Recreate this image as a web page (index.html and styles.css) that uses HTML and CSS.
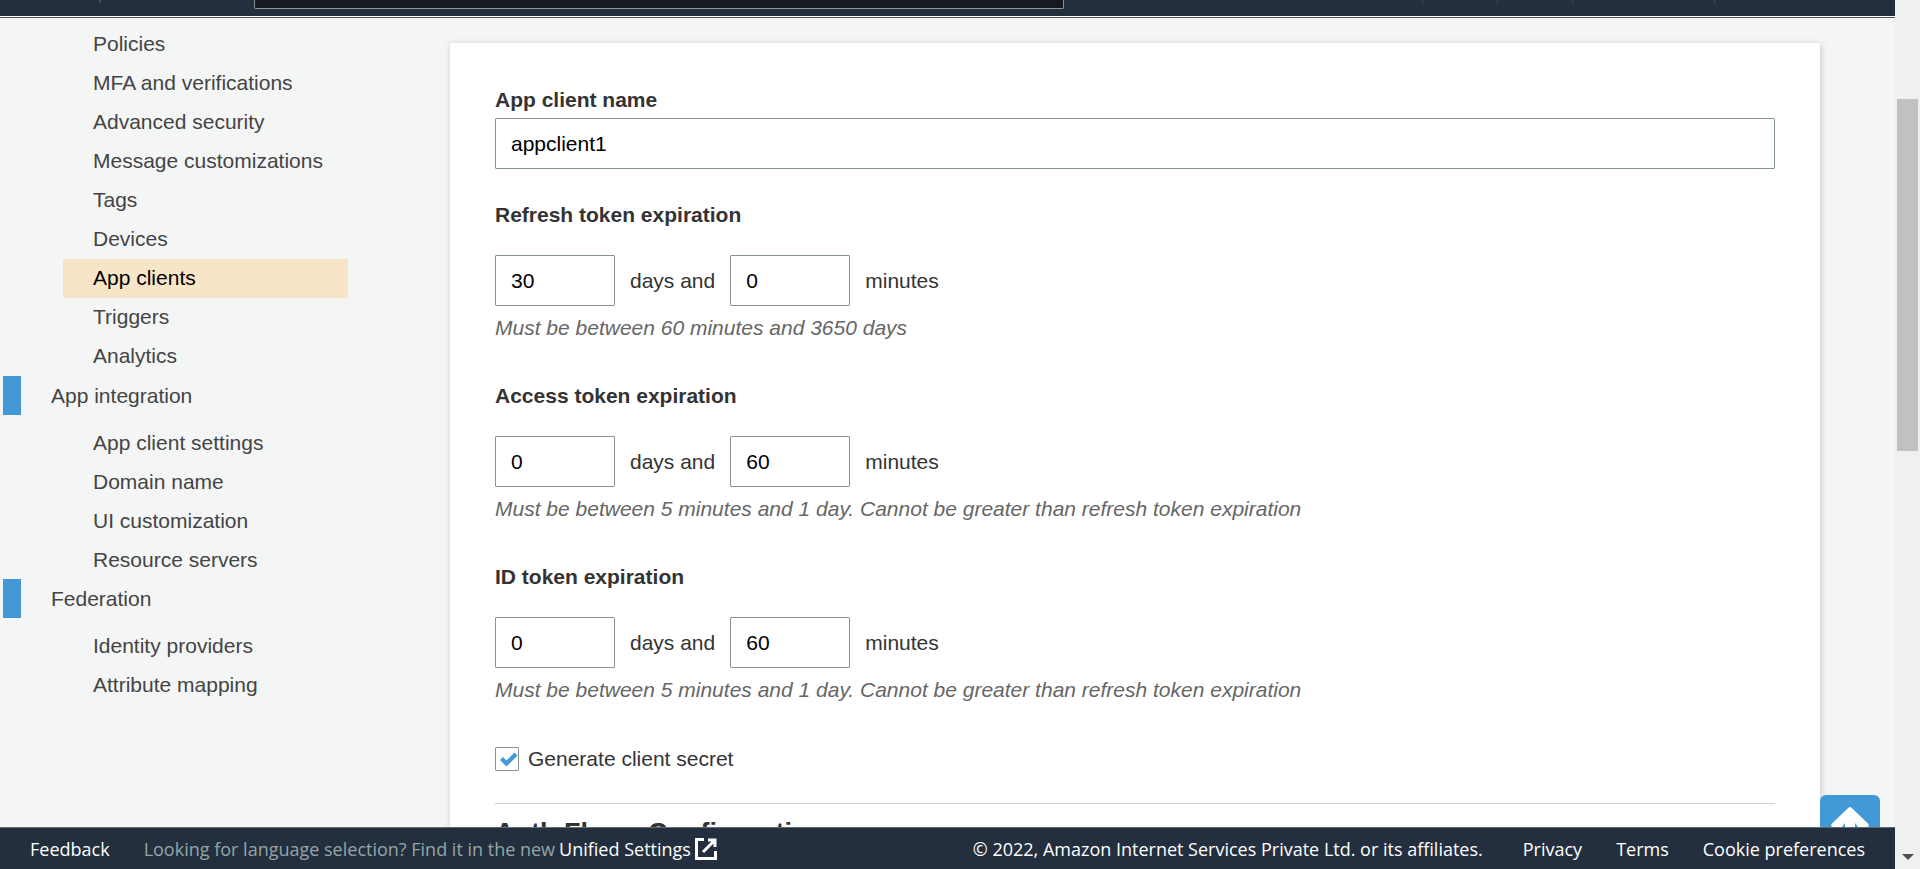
FILE: index.html
```html
<!DOCTYPE html>
<html lang="en">
<head>
<meta charset="utf-8">
<title>App clients</title>
<link rel="stylesheet" href="styles.css">
</head>
<body>
<div class="page">
  <header class="topbar">
    <div class="topbar-brand"></div>
    <div class="topbar-search"></div>
    <div class="topbar-menu"><span class="menu-b"></span><span class="menu-b"></span><span class="menu-c"></span><span class="menu-d"></span></div>
  </header>
  <div class="content">
    <nav class="sidebar">
      <ul class="nav-list main-list">
        <li><a href="#">Policies</a></li>
        <li><a href="#">MFA and verifications</a></li>
        <li><a href="#">Advanced security</a></li>
        <li><a href="#">Message customizations</a></li>
        <li><a href="#">Tags</a></li>
        <li><a href="#">Devices</a></li>
        <li><a href="#" class="active">App clients</a></li>
        <li><a href="#">Triggers</a></li>
        <li><a href="#">Analytics</a></li>
      </ul>
      <a href="#" class="nav-group">App integration</a>
      <ul class="nav-list nested">
        <li><a href="#">App client settings</a></li>
        <li><a href="#">Domain name</a></li>
        <li><a href="#">UI customization</a></li>
        <li><a href="#">Resource servers</a></li>
      </ul>
      <a href="#" class="nav-group">Federation</a>
      <ul class="nav-list nested">
        <li><a href="#">Identity providers</a></li>
        <li><a href="#">Attribute mapping</a></li>
      </ul>
    </nav>
    <main class="card">
      <label class="title" for="name">App client name</label>
      <input class="field" id="name" type="text" value="appclient1">

      <fieldset class="expiry">
        <legend class="title">Refresh token expiration</legend>
        <div class="expiry-row">
          <input class="field short" id="rd" type="text" value="30"><label for="rd">days and</label>
          <input class="field short" id="rm" type="text" value="0"><label for="rm">minutes</label>
        </div>
        <p class="hint">Must be between 60 minutes and 3650 days</p>
      </fieldset>
      <fieldset class="expiry">
        <legend class="title">Access token expiration</legend>
        <div class="expiry-row">
          <input class="field short" id="ad" type="text" value="0"><label for="ad">days and</label>
          <input class="field short" id="am" type="text" value="60"><label for="am">minutes</label>
        </div>
        <p class="hint">Must be between 5 minutes and 1 day. Cannot be greater than refresh token expiration</p>
      </fieldset>
      <fieldset class="expiry">
        <legend class="title">ID token expiration</legend>
        <div class="expiry-row">
          <input class="field short" id="id" type="text" value="0"><label for="id">days and</label>
          <input class="field short" id="im" type="text" value="60"><label for="im">minutes</label>
        </div>
        <p class="hint">Must be between 5 minutes and 1 day. Cannot be greater than refresh token expiration</p>
      </fieldset>

      <div class="check-row">
        <span class="check">
          <input type="checkbox" id="secret" checked>
          <svg viewBox="0 0 24 24" aria-hidden="true"><path d="M5 13l3-3 3.500 3.500L19.500 5.500l3 3L11.500 19.500z"/></svg>
        </span>
        <label for="secret">Generate client secret</label>
      </div>
      <h2 class="section">Auth Flows Configuration</h2>
    </main>
    <button class="to-top" type="button" aria-label="Back to top">
      <svg viewBox="0 0 60 60" aria-hidden="true"><path d="M28.500 12.700Q30 11.500 31.500 12.700L48 28.500Q49.500 30 48 32H38L35 28V50H25V28L22 32H12Q10.500 30 12 28.500Z"/></svg>
    </button>
  </div>
  <footer class="footer">
    <a href="#">Feedback</a>
    <p class="language">Looking for language selection? Find it in the new <a href="#">Unified Settings</a>
      <svg viewBox="0 0 22 22" aria-hidden="true"><path d="M9 1.500H1.500v19h19V13M13 2h7V9M19.500 2.500L8 14"/></svg>
    </p>
    <span class="legal">© 2022, Amazon Internet Services Private Ltd. or its affiliates.</span>
    <a href="#">Privacy</a>
    <a href="#">Terms</a>
    <a href="#">Cookie preferences</a>
  </footer>
</div>
<div class="scrollbar">
  <div class="thumb"></div>
  <svg viewBox="0 0 12 6" aria-hidden="true"><path d="M0 0h12L6 6z"/></svg>
</div>
</body>
</html>
```
FILE: styles.css
```css
* { box-sizing: border-box; }
body {
  margin: 0;
  display: flex;
  height: 100vh;
  overflow: hidden;
  background: #f4f6f6;
  color: #333;
  font: 21px/30px "Liberation Sans", Arial, sans-serif;
}
a { color: inherit; text-decoration: none; }
.page { flex: 1; min-width: 0; display: flex; flex-direction: column; }

.topbar {
  display: flex;
  align-items: flex-start;
  height: 18px;
  flex: none;
  background: #232f3e;
  border-bottom: 1px solid #4d5156;
  box-shadow: inset 0 -1px #fff;
}
.topbar-brand { width: 101px; height: 3px; border-right: 2px solid #414d5c; margin-right: 153px; }
.topbar-search {
  width: 810px;
  height: 9px;
  background: #161920;
  border: 1px solid #879596;
  border-top: 0;
  border-radius: 0 0 2px 2px;
}
.topbar-menu { display: flex; margin-left: auto; height: 3px; }
.topbar-menu span { border-left: 1px solid #414d5c; }
.menu-b { width: 75px; }
.menu-c { width: 142px; }
.menu-d { width: 181px; }

.content { position: relative; flex: 1; min-height: 0; display: flex; overflow: hidden; }
.sidebar { width: 450px; flex: none; padding: 7px 102px 0 3px; color: #444; line-height: 39px; }
.nav-list { list-style: none; margin: 0; padding: 0 0 0 60px; }
.nav-list.nested { padding-top: 8px; }
.nav-list a { display: block; width: 285px; padding-left: 30px; }
.main-list a { line-height: 37px; padding-bottom: 2px; }
.nav-list .active { background: #f8e4c6; color: #000; }
.nav-group { display: block; padding-left: 30px; border-left: 18px solid #4199d8; }

.card {
  flex: 1;
  margin: 25px 75px 0 0;
  padding: 42px 45px 0;
  height: 1000px;
  background: #fff;
  border-radius: 2px;
  box-shadow: 1px 1px 6px rgba(0, 0, 0, .2);
}
.title { display: block; padding: 0; font-weight: bold; }
.field {
  display: block;
  width: 100%;
  height: 51px;
  padding: 0 15px;
  border: 1px solid #879596;
  border-radius: 1px;
  background: #fff;
  color: #000;
  font: inherit;
}
.title + .field { margin-top: 3px; }
.field.short { width: 120px; }
.expiry { margin: 31px 0 0; padding: 0; border: 0; }
.expiry + .expiry { margin-top: 38px; }
.expiry-row { display: flex; align-items: center; gap: 15px; margin-top: 25px; }
.hint { margin: 7px 0 0; color: #666; font-style: italic; }
.check-row { display: flex; align-items: center; gap: 9px; margin-top: 39px; }
.check { position: relative; width: 24px; height: 24px; }
.check input { appearance: none; display: block; width: 24px; height: 24px; margin: 0; border: 1px solid #879596; border-radius: 1px; background: #fff; }
.check svg { position: absolute; inset: 0; fill: #4199d8; pointer-events: none; }
.section { margin: 29px 0 0; padding-top: 14px; border-top: 1px solid #ccc; font-size: 27px; line-height: 30px; }

.to-top { position: absolute; right: 15px; bottom: -28px; width: 60px; height: 60px; padding: 0; border: 0; border-radius: 6px; background: #4199d8; }
.to-top svg { display: block; fill: #fff; }

.footer {
  display: flex;
  align-items: center;
  gap: 34px;
  flex: none;
  height: 42px;
  padding: 0 30px;
  background: #232f3e;
  border-top: 1px solid #5f6b6d;
  color: #fff;
  font: 18px/24px "Open Sans", "Noto Sans", sans-serif;
}
.language { display: flex; align-items: center; gap: 4px; margin: 0; color: #95a5a6; }
.language a { color: #fff; }
.language svg { width: 22px; height: 22px; fill: none; stroke: #fff; stroke-width: 3; }
.legal { margin: 0 6px 0 auto; }

.scrollbar { width: 25px; flex: none; display: flex; flex-direction: column; justify-content: space-between; align-items: center; padding: 99px 0 9px; background: #f0f0f0; }
.thumb { width: 21px; height: 352px; background: #c1c1c1; }
.scrollbar svg { width: 12px; height: 6px; fill: #505050; }
```
